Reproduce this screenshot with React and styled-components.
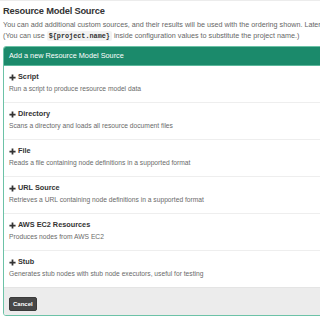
import React from "react";
import styled, { createGlobalStyle } from "styled-components";

const Global = createGlobalStyle`
  html, body { margin: 0; padding: 0; background: #fff; overflow: hidden; }
  body { font-family: "Liberation Sans", Arial, sans-serif; color: #333; }
`;

const Page = styled.div`
  width: 420px;
  border-top: 1px solid #ececec;
  padding: 3px 3px 0 3px;
`;

const Title = styled.h3`
  margin: 0;
  font-size: 9.3px;
  letter-spacing: -0.2px;
  line-height: 14px;
  font-weight: bold;
  color: #333;
`;

const Help = styled.p`
  margin: 1px 0 4px;
  font-size: 7.2px;
  line-height: 11px;
  color: #666;
  white-space: nowrap;
`;

const Code = styled.code`
  font-family: "Liberation Mono", "Courier New", monospace;
  font-size: 6.8px;
  font-weight: bold;
  background: #f2f2f2;
  color: #333;
  padding: 1px 2px;
  border-radius: 2px;
`;

const Panel = styled.div`
  border: 1px solid #6cc2a7;
  border-radius: 3px;
  overflow: hidden;
`;

const PanelHeading = styled.div`
  background: #1b8a6b;
  color: #fff;
  font-size: 7.3px;
  line-height: 18px;
  padding: 0 5px;
  border-bottom: 1px solid #5bb79b;
`;

const Item = styled.div`
  padding: 5px 5px 7px;
  border-top: ${(p) => (p.$first ? "none" : "1px solid #eeeeee")};
`;

const ItemTitle = styled.div`
  display: flex;
  align-items: center;
  gap: 2px;
  font-size: 7.3px;
  line-height: 12px;
  font-weight: bold;
  color: #333;
`;

const ItemDesc = styled.div`
  font-size: 6.7px;
  line-height: 12px;
  color: #6a6a6a;
`;

const Footer = styled.div`
  background: #ececec;
  border-top: 1px solid #e4e4e4;
  padding: 4px 5px 4px;
`;

const CancelButton = styled.button`
  font-family: "Liberation Sans", Arial, sans-serif;
  font-size: 6px;
  font-weight: bold;
  color: #fff;
  background: #474747;
  border: 1px solid #3a3a3a;
  border-radius: 2px;
  height: 14px;
  padding: 0 3px;
  line-height: 12px;
  cursor: pointer;
`;

const Plus = () => (
  <svg width="7" height="7" viewBox="0 0 8 8">
    <path d="M4 0.5v7M0.5 4h7" stroke="#333" strokeWidth="2" />
  </svg>
);

const sources = [
  ["Script", "Run a script to produce resource model data"],
  ["Directory", "Scans a directory and loads all resource document files"],
  ["File", "Reads a file containing node definitions in a supported format"],
  ["URL Source", "Retrieves a URL containing node definitions in a supported format"],
  ["AWS EC2 Resources", "Produces nodes from AWS EC2"],
  ["Stub", "Generates stub nodes with stub node executors, useful for testing"],
];

export default function App() {
  return (
    <>
      <Global />
      <Page>
        <Title>Resource Model Source</Title>
        <Help>
          You can add additional custom sources, and their results will be used with the ordering shown. Later sources will override earlier sources.
          <br />
          (You can use <Code>{"${project.name}"}</Code> inside configuration values to substitute the project name.)
        </Help>
        <Panel>
          <PanelHeading>Add a new Resource Model Source</PanelHeading>
          {sources.map(([t, d], i) => (
            <Item key={t} $first={i === 0}>
              <ItemTitle>
                <Plus />
                {t}
              </ItemTitle>
              <ItemDesc>{d}</ItemDesc>
            </Item>
          ))}
          <Footer>
            <CancelButton>Cancel</CancelButton>
          </Footer>
        </Panel>
      </Page>
    </>
  );
}
